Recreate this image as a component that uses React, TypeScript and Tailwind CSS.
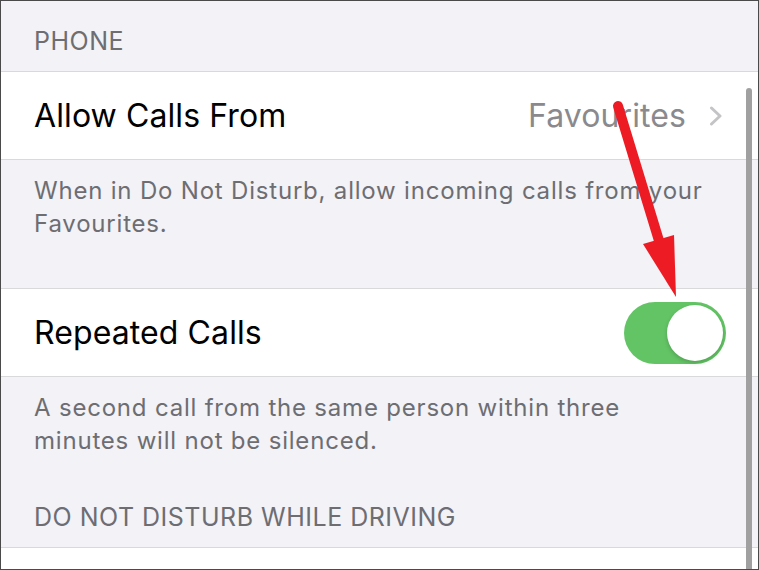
import React from 'react';

const SectionHeader = ({ children }: { children: React.ReactNode }) => (
    <div className="h-[70px] flex items-end pl-[33px] pb-[17px] text-[25px] leading-[25px] tracking-[0.5px] text-[#6d6d72] uppercase">
        {children}
    </div>
);

const Footer = ({ text, height }: { text: string; height: string }) => (
    <div className={`${height} pl-[33px] pr-[40px] pt-[14px] text-[24px] leading-[33px] tracking-[0.8px] text-[#6d6d72]`}>
        {text}
    </div>
);

const Chevron = () => (
    <svg width="14" height="20" viewBox="0 0 14 20" fill="none">
        <polyline points="2.5,2 11,10 2.5,18" stroke="#c4c4c7" strokeWidth="3" strokeLinecap="round" strokeLinejoin="round" />
    </svg>
);

const Toggle = () => (
    <div className="w-[102px] h-[62px] rounded-full bg-[#63c465] p-[3px] flex justify-end">
        <div className="w-[56px] h-[56px] rounded-full bg-white shadow-[0_2px_4px_rgba(0,0,0,0.18)]" />
    </div>
);

const App = () => {
    const rowBase = 'h-[89px] bg-white border-y border-[#d9d9dc] flex items-center pl-[33px] text-[32px] tracking-[0.1px] text-black';

    return (
        <div className="relative w-[759px] h-[570px] overflow-hidden bg-[#f2f2f7] border border-[#4a4a4a] flex flex-col font-['Inter',sans-serif]">
            <SectionHeader>Phone</SectionHeader>

            <div className={`${rowBase} pr-[35px]`}>
                <span className="flex-1">Allow Calls From</span>
                <span className="text-[#8a8a8e] mr-[23px]">Favourites</span>
                <Chevron />
            </div>

            <Footer height="h-[128px]" text="When in Do Not Disturb, allow incoming calls from your Favourites." />

            <div className={`${rowBase} pr-[32px]`}>
                <span className="flex-1">Repeated Calls</span>
                <Toggle />
            </div>

            <Footer height="h-[100px]" text="A second call from the same person within three minutes will not be silenced." />

            <SectionHeader>Do Not Disturb While Driving</SectionHeader>

            <div className="flex-1 bg-white border-t border-[#d9d9dc]" />

            {/* scroll indicator */}
            <div className="absolute left-[745px] top-[87px] w-[6px] h-[500px] rounded-full bg-[#a0a0a0]" />

            {/* annotation arrow */}
            <svg className="absolute left-[-1px] top-[-1px] pointer-events-none" width="759" height="570" viewBox="0 0 759 570">
                <line x1="618" y1="106" x2="660" y2="244" stroke="#ed1c24" strokeWidth="10" strokeLinecap="round" />
                <polygon points="643,244 674,235 676,297" fill="#ed1c24" />
            </svg>
        </div>
    );
};

export default App;
